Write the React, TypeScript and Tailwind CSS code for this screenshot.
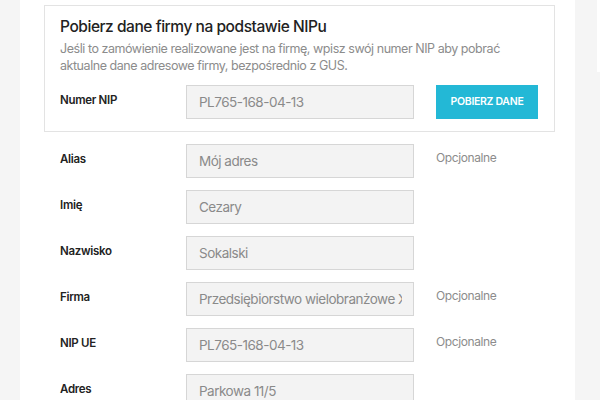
import React from "react";

const rows = [
  { label: "Alias", value: "Mój adres", optional: true },
  { label: "Imię", value: "Cezary" },
  { label: "Nazwisko", value: "Sokalski" },
  { label: "Firma", value: "Przedsiębiorstwo wielobranżowe XYZ", optional: true },
  { label: "NIP UE", value: "PL765-168-04-13", optional: true },
  { label: "Adres", value: "Parkowa 11/5" },
];

const Field = ({ value }: { value: string }) => (
  <div className="h-[34px] w-[228px] shrink-0 border border-[#d6d6d6] bg-[#f3f3f3] pl-[12px] pr-[11px] text-[13.5px] leading-[32px] tracking-[-0.5px] text-[#8a8a8a]">
    <div className="overflow-hidden whitespace-nowrap">{value}</div>
  </div>
);

export default function App() {
  return (
    <div className="relative flex h-[400px] w-[600px] overflow-hidden bg-[#f5f5f5] font-['Inter','Liberation_Sans',sans-serif]">
      <div className="ml-[20px] h-full w-[555px] bg-white pl-[24px] pt-[5px]">
        <div className="w-[511px] border border-[#e3e3e3] pb-[12px] pl-[15px] pt-[10px]">
          <h2 className="text-[15.5px] font-medium leading-[22px] tracking-[-0.45px] text-[#222]">
            Pobierz dane firmy na podstawie NIPu
          </h2>
          <p className="mt-[2px] w-[480px] text-[12.5px] leading-[17px] tracking-[-0.45px] text-[#8c8c8c]">
            Jeśli to zamówienie realizowane jest na firmę, wpisz swój numer NIP aby pobrać aktualne dane adresowe firmy, bezpośrednio z GUS.
          </p>
          <div className="mt-[11px] flex items-start">
            <div className="w-[126px] pt-[7px] text-[11.5px] font-semibold tracking-[-0.3px] text-[#222]">Numer NIP</div>
            <Field value="PL765-168-04-13" />
            <button className="ml-[22px] h-[34px] w-[102px] bg-[#23b8d6] text-[10.5px] font-semibold tracking-[-0.3px] text-white">
              POBIERZ DANE
            </button>
          </div>
        </div>
        <div className="flex flex-col gap-[12px] pl-[16px] pt-[12px]">
          {rows.map((r) => (
            <div key={r.label} className="flex items-start">
              <div className="w-[126px] pt-[7px] text-[11.5px] font-semibold tracking-[-0.3px] text-[#222]">{r.label}</div>
              <Field value={r.value} />
              {r.optional && (
                <div className="ml-[22px] pt-[5px] text-[12px] tracking-[-0.4px] text-[#8c8c8c]">Opcjonalne</div>
              )}
            </div>
          ))}
        </div>
      </div>
      <div className="absolute right-0 top-0 h-[72px] w-[3px] bg-white" />
    </div>
  );
}
